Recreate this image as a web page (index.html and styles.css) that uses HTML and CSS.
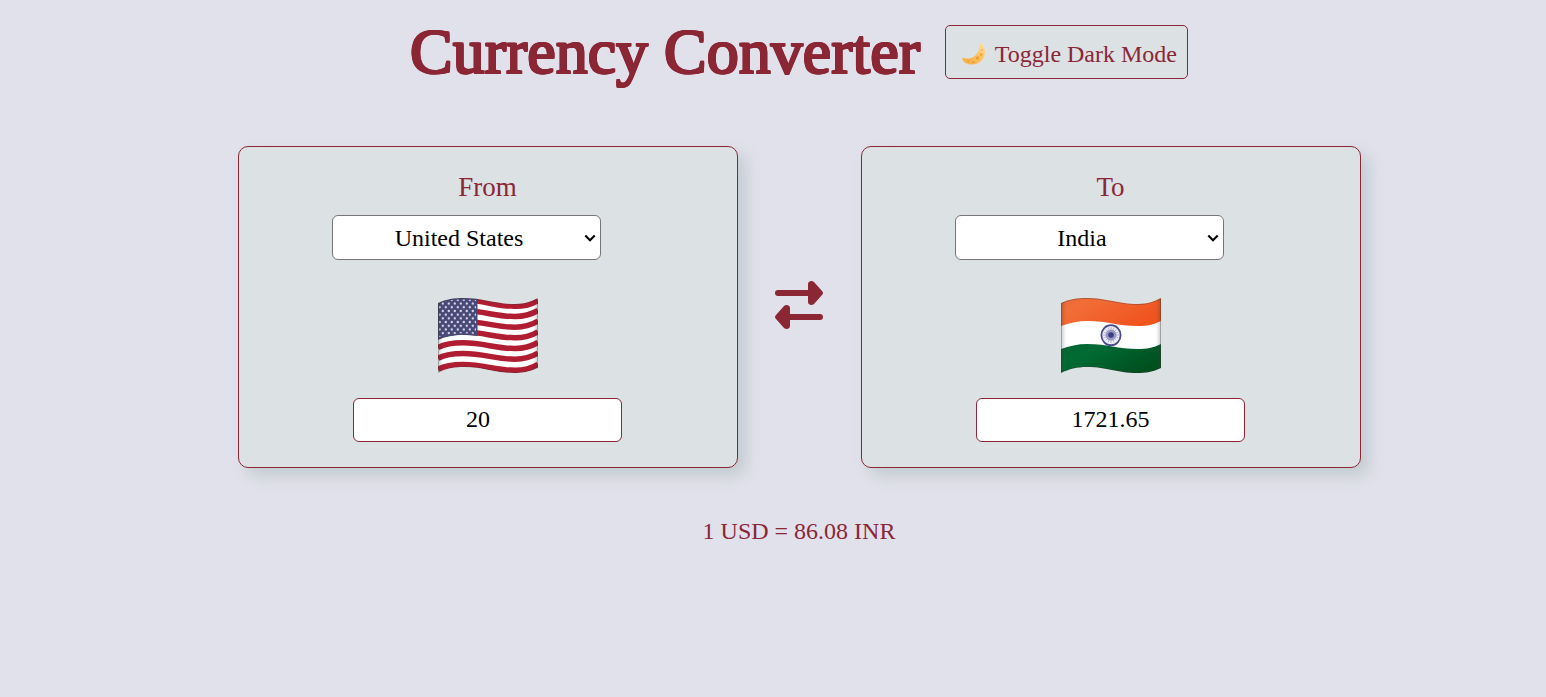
FILE: index.html
```html
<!DOCTYPE html>
<html lang="en">
<head>
<meta charset="utf-8">
<title>Currency Converter</title>
<link rel="stylesheet" href="styles.css">
</head>
<body>
<header class="header">
  <h1 class="title">Currency Converter</h1>
  <button class="toggle" type="button">
    <svg class="moon" viewBox="0 0 24 24" aria-hidden="true">
      <defs><linearGradient id="glow" x1="0" y1="1" x2="1" y2="0"><stop offset="0" stop-color="#f5ad45"/><stop offset=".5" stop-color="#ffbd58"/><stop offset="1" stop-color="#ffe29a"/></linearGradient></defs>
      <path d="M19.400 1.300C24.800 5 25.600 13 21 18C15 24.500 4.500 23.800 1.200 16.900C1 16.200 1.400 15.900 2.100 16.100C6 17.100 10.500 16.600 14 13.700C17.600 10.700 19 6.500 18.300 1.900C18.300 1.100 18.800 .900 19.400 1.300Z" fill="url(#glow)"/>
      <g fill="#e39436" fill-opacity=".75"><circle cx="16.500" cy="16" r="1.700"/><circle cx="12.500" cy="20.300" r="1.300"/><circle cx="20.200" cy="12.600" r="1.300"/><circle cx="7.500" cy="19" r="1.100"/><circle cx="21" cy="8" r=".8"/></g>
    </svg>
    <span>Toggle Dark Mode</span>
  </button>
</header>
<main class="converter">
  <section class="card">
    <label class="label" for="from">From</label>
    <div class="picker">
      <select class="select" id="from"><option>United States</option></select>
      <svg class="chevron" viewBox="0 0 12 8" aria-hidden="true"><path d="M1.300 1.500L6 6.200L10.700 1.500"/></svg>
    </div>
    <svg class="flag" viewBox="0 0 100 75" role="img" aria-label="United States flag">
      <defs>
        <filter id="soft" x="0" y="0" width="1" height="1"><feGaussianBlur stdDeviation=".6"/></filter>
        <clipPath id="wave"><path d="M0 5C8 1 17 0 25 0C47 0 56 6 77 6C87 6 94 3 100 0V70C92 74 85 75 76 75C55 75 47 69 26 69C16 69 8 71 0 75Z"/></clipPath>
        <linearGradient id="shade" x1="0" x2="1" y1="0" y2="0"><stop offset="0" stop-color="#333" stop-opacity=".25"/><stop offset=".05" stop-color="#333" stop-opacity="0"/><stop offset=".95" stop-color="#333" stop-opacity="0"/><stop offset="1" stop-color="#333" stop-opacity=".25"/></linearGradient>
        <pattern id="stars" width="6" height="7.4" patternUnits="userSpaceOnUse"><circle cx="1.8" cy="1.8" r="1.200" fill="#d8d8ea"/><circle cx="4.8" cy="5.5" r="1.200" fill="#d8d8ea"/></pattern>
      </defs>
      <g clip-path="url(#wave)"><g filter="url(#soft)">
        <path d="M0 0H100V75H0Z" fill="#fff"/>
        <g fill="none" stroke="#b01c30" stroke-width="5.500">
          <path d="M0 7C8 3 17 2 25 2C47 2 56 8.300 77 8.300C87 8.300 94 6 100 2.500"/>
          <path id="s" d="M0 17.500C8 13.500 17 12.800 25 12.800C47 12.800 56 18.500 77 18.500C87 18.500 94 16 100 12.500"/>
          <use href="#s" y="10.700"/><use href="#s" y="21.300"/><use href="#s" y="32"/><use href="#s" y="42.700"/><use href="#s" y="53.800"/>
        </g>
        <path d="M0 0H39.500V38C25 36 10 37 0 42Z" fill="#484878"/>
        <path d="M1 5C10 1 24 1 38 2V36C24 34 10 36 1 39Z" fill="url(#stars)"/>
        <path d="M0 0H100V75H0Z" fill="url(#shade)"/>
        <path d="M0 5C8 1 17 0 25 0C47 0 56 6 77 6C87 6 94 3 100 0V70C92 74 85 75 76 75C55 75 47 69 26 69C16 69 8 71 0 75Z" fill="none" stroke="#333" stroke-opacity=".3" stroke-width="2"/>
      </g></g>
    </svg>
    <input class="amount amount-editable" type="number" value="20" aria-label="Amount">
  </section>
  <svg class="swap" viewBox="0 0 48 48" aria-hidden="true"><path id="arrow" d="M45 33H15V27C15 24 11 23 9 25L1 34Q-1 36 1 38L9 47C11 49 15 48 15 45V39H45A3 3 0 0 0 45 33Z"/><use href="#arrow" transform="rotate(180 24 24)"/></svg>
  <section class="card">
    <label class="label" for="to">To</label>
    <div class="picker">
      <select class="select" id="to"><option>India</option></select>
      <svg class="chevron" viewBox="0 0 12 8" aria-hidden="true"><path d="M1.300 1.500L6 6.200L10.700 1.500"/></svg>
    </div>
    <svg class="flag" viewBox="0 0 100 75" role="img" aria-label="India flag">
      <defs>
        <linearGradient id="saffron" x1="0" x2="1" y1="0" y2=".5"><stop offset="0" stop-color="#e9683a"/><stop offset=".25" stop-color="#f26d38"/><stop offset="1" stop-color="#f0541f"/></linearGradient>
        <linearGradient id="green" x1="0" x2="1" y1="0" y2=".5"><stop offset="0" stop-color="#04622f"/><stop offset=".3" stop-color="#066c34"/><stop offset="1" stop-color="#04511f"/></linearGradient>
      </defs>
      <g clip-path="url(#wave)"><g filter="url(#soft)">
        <path d="M0 0H100V75H0Z" fill="#fff"/>
        <path d="M0 0H100V23C92 27 86 28 77 28C56 28 47 23 26 23C17 23 8 25 0 28Z" fill="url(#saffron)"/>
        <path d="M0 51C8 48 17 46 26 46C47 46 56 51 77 51C86 51 92 50 100 46V75H0Z" fill="url(#green)"/>
        <ellipse cx="50" cy="37.200" rx="9.600" ry="10" fill="#f0f0f7" stroke="#4a4a8e" stroke-width="1.800"/>
        <g stroke="#8888b5" stroke-width=".6"><path d="M50 29V45M42 37H58M44.500 31.500L55.500 42.500M55.500 31.500L44.500 42.500M47 29.500L53 44.500M53 29.500L47 44.500M42.500 34L57.500 40M42.500 40L57.500 34"/></g>
        <circle cx="50" cy="37" r="5.500" fill="#7777ad" fill-opacity=".6"/><circle cx="50" cy="37" r="2.800" fill="#3c3c82"/>
        <path d="M0 0H100V75H0Z" fill="url(#shade)"/>
        <path d="M0 5C8 1 17 0 25 0C47 0 56 6 77 6C87 6 94 3 100 0V70C92 74 85 75 76 75C55 75 47 69 26 69C16 69 8 71 0 75Z" fill="none" stroke="#333" stroke-opacity=".3" stroke-width="2"/>
      </g></g>
    </svg>
    <input class="amount" type="text" value="1721.65" aria-label="Converted amount">
  </section>
</main>
<p class="rate">1 USD = 86.08 INR</p>
</body>
</html>
```

FILE: styles.css
```css
* { box-sizing: border-box; }
body {
  margin: 0;
  padding: 25px 0 0 52px;
  background: #e1e1eb;
  color: #8b2635;
  font-family: "Liberation Serif", serif;
  font-size: 24px;
}
.header {
  display: flex;
  justify-content: center;
  height: 54px;
  gap: 25px;
}
.title {
  margin: 0;
  font-size: 64px;
  font-weight: 400;
  line-height: 54px;
  text-shadow:
    1px 0 #8b2635, -1px 0 #8b2635, 0 1px #8b2635, 0 -1px #8b2635,
    1px 1px #8b2635, -1px 1px #8b2635, 1px -1px #8b2635, -1px -1px #8b2635;
}
.toggle {
  display: flex;
  justify-content: flex-end;
  align-items: center;
  gap: 10px;
  width: 243px;
  height: 54px;
  padding: 4px 10px 0;
  border: 1px solid #8b2635;
  border-radius: 5px;
  background: #dce1e3;
  color: inherit;
  font: inherit;
  white-space: nowrap;
}
.moon { width: 24px; height: 24px; overflow: visible; }
.converter {
  display: flex;
  justify-content: center;
  align-items: center;
  gap: 37.500px;
  margin-top: 67px;
}
.card {
  display: flex;
  flex-direction: column;
  align-items: center;
  width: 500px;
  height: 322px;
  padding-top: 25px;
  border: 1px solid #8b2635;
  border-radius: 10px;
  background: #dce1e3;
  box-shadow: 8px 8px 15px #c3ccd0;
}
.label { font-size: 27px; line-height: 31px; }
.picker { position: relative; margin: 12px 42px 0 0; height: 45px; }
.select {
  appearance: none;
  width: 269px;
  height: 45px;
  padding: 0 15px 0 0;
  border: 1px solid #767676;
  border-radius: 6px;
  background-color: #fff;
  color: #000;
  font: inherit;
  text-align: center;
}
.chevron {
  position: absolute;
  top: 19px;
  right: 5px;
  width: 12px;
  height: 8px;
  fill: none;
  stroke: #000;
  stroke-width: 2.100;
  pointer-events: none;
}
.flag { width: 100px; height: 75px; margin-top: 38px; }
.amount {
  width: 269px;
  height: 44px;
  margin-top: 25px;
  padding: 0 10px 2px;
  border: 1px solid #8b2635;
  border-radius: 6px;
  background: #fff;
  color: #000;
  font: inherit;
  text-align: center;
}
.amount-editable { padding-right: 14px; }
.swap { width: 48px; height: 48px; margin-bottom: 4px; overflow: visible; fill: #8b2635; }
.rate { margin: 49px 0 0; line-height: 28px; text-align: center; }
```
